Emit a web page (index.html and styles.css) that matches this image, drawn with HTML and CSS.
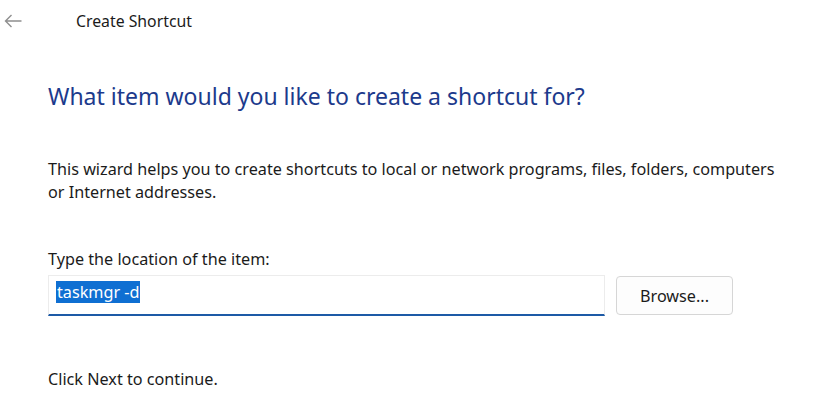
FILE: index.html
```html
<!DOCTYPE html>
<html>
<head>
<meta charset="utf-8">
<link rel="stylesheet" href="styles.css">
</head>
<body>
<div class="window">
  <div class="titlebar">
    <span class="back">
      <svg width="18" height="14" viewBox="0 0 18 14"><path d="M17.5 7H1.5M7.5 1L1.5 7l6 6" fill="none" stroke="#8f8f8f" stroke-width="1.4"/></svg>
    </span>
    <span class="title">Create Shortcut</span>
  </div>
  <div class="content">
    <h1 class="heading">What item would you like to create a shortcut for?</h1>
    <p class="desc">This wizard helps you to create shortcuts to local or network programs, files, folders, computers or Internet addresses.</p>
    <div class="label">Type the location of the item:</div>
    <div class="row">
      <div class="input"><span class="sel">taskmgr -d</span></div>
      <div class="button">Browse...</div>
    </div>
    <p class="next">Click Next to continue.</p>
  </div>
</div>
</body>
</html>
```
FILE: styles.css
```css
html, body {
  margin: 0;
  padding: 0;
  background: #ffffff;
}
body {
  font-family: "Noto Sans", "Open Sans", sans-serif;
  color: #1b1b1b;
  width: 825px;
  height: 409px;
  overflow: hidden;
}
.titlebar {
  display: flex;
  align-items: center;
  height: 42px;
}
.back {
  display: flex;
  width: 76px;
  padding-left: 4px;
  box-sizing: border-box;
}
.title {
  font-size: 15.8px;
  color: #1b1b1b;
}
.content {
  padding-left: 48px;
}
.heading {
  margin: 39px 0 0 0;
  font-weight: normal;
  font-size: 23px;
  line-height: 30px;
  color: #1c3a8c;
}
.desc {
  margin: 47px 0 0 0;
  font-size: 16.2px;
  line-height: 23px;
  width: 730px;
}
.label {
  margin-top: 44px;
  font-size: 16.2px;
  line-height: 22px;
}
.row {
  display: flex;
  align-items: center;
  margin-top: 5px;
}
.input {
  width: 557px;
  height: 41px;
  box-sizing: border-box;
  border: 1px solid #ececec;
  border-bottom: 2px solid #1d5aa6;
  padding: 5px 0 0 7px;
  font-size: 16.2px;
  line-height: 22px;
}
.sel {
  background: #0f6fd2;
  color: #ffffff;
  padding: 0 1px;
}
.button {
  margin-left: 11px;
  width: 117px;
  height: 39px;
  box-sizing: border-box;
  border: 1px solid #d6d6d6;
  border-radius: 4px;
  display: flex;
  align-items: center;
  justify-content: center;
  font-size: 16.2px;
  color: #1b1b1b;
  background: #fdfdfd;
}
.next {
  margin: 52px 0 0 0;
  font-size: 16.2px;
  line-height: 22px;
}
```
